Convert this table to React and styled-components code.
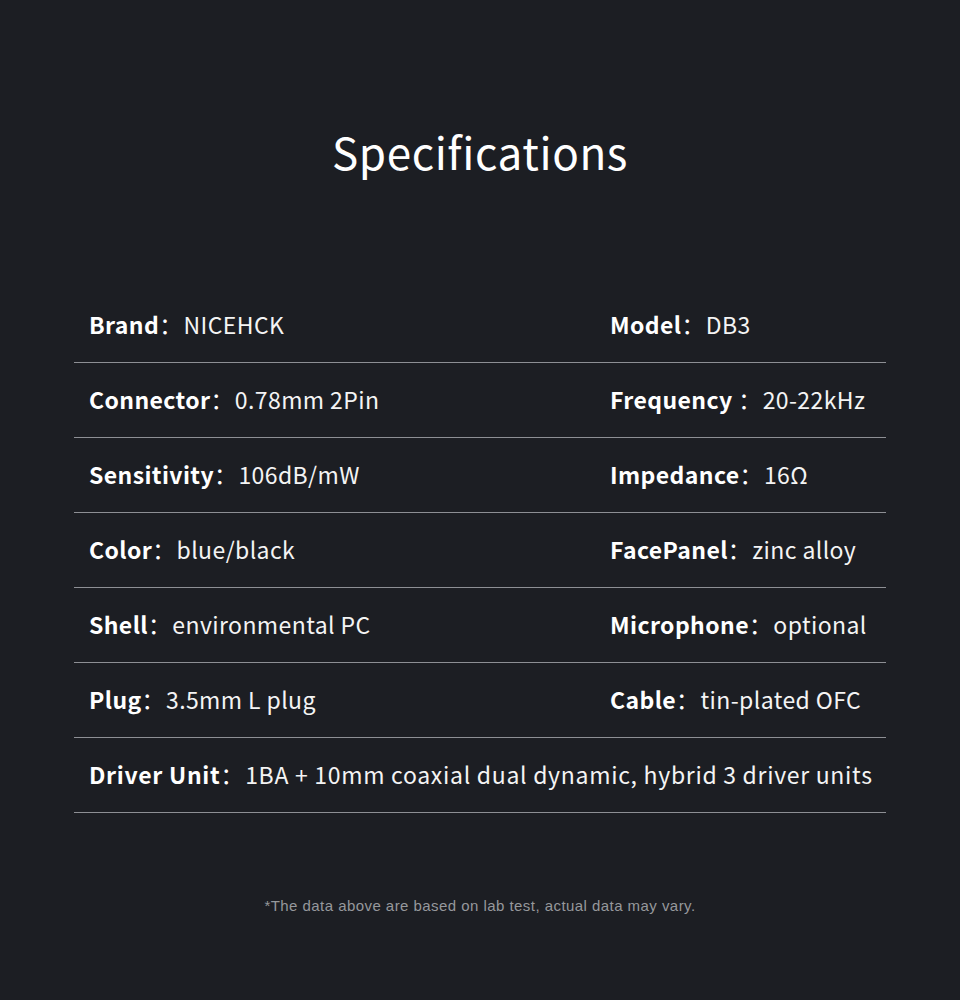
import React from "react"
import styled, { createGlobalStyle } from "styled-components"

const GlobalStyle = createGlobalStyle`
  html, body {
    margin: 0;
    padding: 0;
    background: #1c1e23;
  }
`

const Page = styled.div`
  width: 960px;
  height: 1000px;
  background: #1c1e23;
  color: #ffffff;
  font-family: "Noto Sans CJK SC", "Noto Sans", sans-serif;
  display: flex;
  flex-direction: column;
  align-items: center;
  overflow: hidden;
`

const Title = styled.h1`
  margin: 116px 0 0;
  font-size: 44px;
  font-weight: 400;
  line-height: 70px;
  letter-spacing: 0.6px;
  color: #ffffff;
`

const Table = styled.div`
  width: 812px;
  margin-top: 102px;
  display: flex;
  flex-direction: column;
`

const Row = styled.div`
  display: flex;
  align-items: center;
  height: 74px;
  border-bottom: 1px solid #8d8f94;
`

const Cell = styled.div`
  width: ${(p) => (p.$wide ? "auto" : p.$right ? "276px" : "521px")};
  flex-shrink: 0;
  padding-left: 15px;
  box-sizing: border-box;
  white-space: nowrap;
  font-size: 23px;
  line-height: 30px;
  padding-bottom: 2px;
  letter-spacing: ${(p) => (p.$wide ? "0.7px" : "0.4px")};
`

const Label = styled.span`
  font-weight: 700;
`

const Colon = styled.span`
  font-weight: 400;
  margin-right: 1px;
`

const Value = styled.span`
  font-weight: 400;
  color: #f4f4f4;
`

const Note = styled.p`
  margin: 84px 0 0;
  font-family: "Liberation Sans", Arial, sans-serif;
  font-size: 15px;
  color: #96989c;
  letter-spacing: 0.45px;
`

const rows = [
  [["Brand", "NICEHCK"], ["Model", "DB3"]],
  [["Connector", "0.78mm 2Pin"], ["Frequency ", "20-22kHz"]],
  [["Sensitivity", "106dB/mW"], ["Impedance", "16Ω"]],
  [["Color", "blue/black"], ["FacePanel", "zinc alloy"]],
  [["Shell", "environmental PC"], ["Microphone", "optional"]],
  [["Plug", "3.5mm L plug"], ["Cable", "tin-plated OFC"]],
]

function Spec({ label, value }) {
  return (
    <>
      <Label>{label}</Label>
      <Colon>：</Colon>
      <Value>{value}</Value>
    </>
  )
}

export default function App() {
  return (
    <Page>
      <GlobalStyle />
      <Title>Specifications</Title>
      <Table>
        {rows.map(([left, right]) => (
          <Row key={left[0]}>
            <Cell>
              <Spec label={left[0]} value={left[1]} />
            </Cell>
            <Cell $right>
              <Spec label={right[0]} value={right[1]} />
            </Cell>
          </Row>
        ))}
        <Row>
          <Cell $wide>
            <Spec label="Driver Unit" value="1BA + 10mm coaxial dual dynamic, hybrid 3 driver units" />
          </Cell>
        </Row>
      </Table>
      <Note>*The data above are based on lab test, actual data may vary.</Note>
    </Page>
  )
}
